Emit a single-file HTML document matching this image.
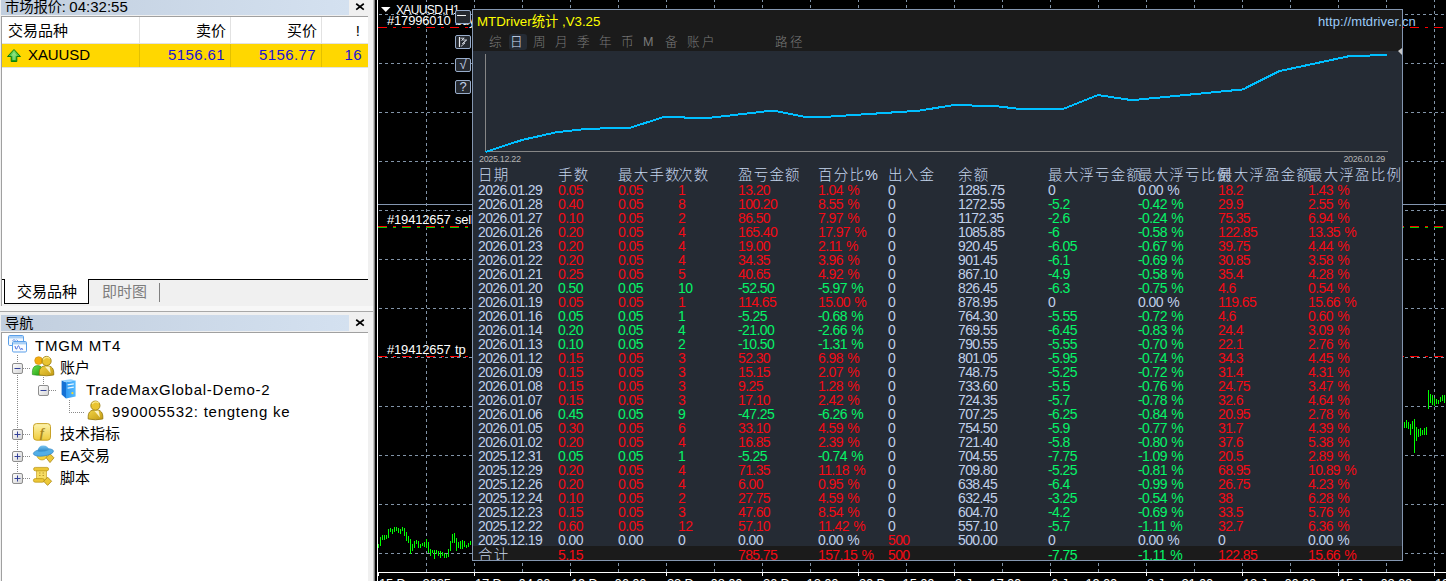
<!DOCTYPE html>
<html lang="zh-CN"><head><meta charset="utf-8"><title>MT4</title>
<style>
html,body{margin:0;padding:0}
body{width:1446px;height:581px;overflow:hidden;background:#f0f0f0;position:relative;font-family:"Liberation Sans","Noto Sans CJK SC",sans-serif;font-size:15px;color:#000}
.a{position:absolute}
.t{position:absolute;white-space:nowrap;line-height:1}
#chart{position:absolute;left:378px;top:0;width:1068px;height:581px;background:#000;overflow:hidden}
#panel{position:absolute;left:472px;top:9px;width:929px;height:550px;background:#252b34;border:1px solid #8496b0;box-sizing:content-box;overflow:hidden}
.c{position:absolute;white-space:nowrap;font-size:14px;line-height:14px;height:14px;letter-spacing:-0.6px;word-spacing:1px}
.h{position:absolute;white-space:nowrap;font-size:14.5px;line-height:15px;letter-spacing:1.2px;color:#c6d6ee;font-family:"Liberation Sans","Noto Sans CJK SC",sans-serif;font-weight:300}
.r{color:#f40a14}.g{color:#06f468}.w{color:#c0d0ea}
.lt{position:absolute;white-space:nowrap;font-size:15px;line-height:22px;height:22px}
.ct{position:absolute;white-space:nowrap;color:#fff;font-size:13px;line-height:14px;letter-spacing:-0.17px}
.btn{position:absolute;left:455px;width:14px;height:12px;border:1px solid #98acca;border-radius:2px;background:#25292f}
</style></head><body>

<div class="a" style="left:1px;top:0;width:348px;height:15px;background:linear-gradient(90deg,#c1cede,#d4e1f0)"></div>
<div class="t" style="left:5px;top:-2px;font-size:15px;line-height:18px"><span style="font-size:14.4px;letter-spacing:-0.2px">市场报价: </span>04:32:55</div>
<svg class="a" style="left:354px;top:2px" width="11" height="11" viewBox="0 0 11 11"><path d="M2.2 1.8 L9.8 7.6 M9.8 1.8 L2.2 7.6" stroke="#000" stroke-width="1.7" fill="none"/></svg>
<div class="a" style="left:1px;top:16px;width:367px;height:290px;background:#fff;border-left:1px solid #a0a0a0;border-top:1px solid #a0a0a0;box-sizing:border-box"></div>
<div class="a" style="left:139px;top:17px;width:1px;height:26px;background:#e2e2e2"></div>
<div class="a" style="left:230px;top:17px;width:1px;height:26px;background:#e2e2e2"></div>
<div class="a" style="left:321px;top:17px;width:1px;height:26px;background:#e2e2e2"></div>
<div class="a" style="left:2px;top:43px;width:366px;height:1px;background:#e2e2e2"></div>
<div class="a" style="left:2px;top:44px;width:366px;height:23px;background:#ffd700"></div>
<div class="a" style="left:2px;top:67px;width:366px;height:1px;background:#e2e2e2"></div>
<div class="a" style="left:139px;top:44px;width:1px;height:23px;background:#e3c000"></div>
<div class="a" style="left:230px;top:44px;width:1px;height:23px;background:#e3c000"></div>
<div class="a" style="left:321px;top:44px;width:1px;height:23px;background:#e3c000"></div>
<div class="lt" style="left:8px;top:20px">交易品种</div>
<div class="lt" style="right:1220px;top:20px">卖价</div>
<div class="lt" style="right:1129px;top:20px">买价</div>
<div class="lt" style="right:1086px;top:20px">!</div>
<svg class="a" style="left:6px;top:48px" width="16" height="16" viewBox="0 0 16 16"><defs><linearGradient id="ga" x1="0" y1="0" x2="0" y2="1"><stop offset="0" stop-color="#7be36a"/><stop offset="1" stop-color="#0f9a12"/></linearGradient></defs><path d="M8 1.5 L14.5 8.5 L10.8 8.5 L10.8 13.5 L5.2 13.5 L5.2 8.5 L1.5 8.5 Z" fill="url(#ga)" stroke="#0b7d10" stroke-width="1"/><path d="M8 4 L11.5 7.8 L9.6 7.8 L9.6 12 L6.4 12 L6.4 7.8 L4.5 7.8 Z" fill="#b9f5a8" opacity=".55"/></svg>
<div class="lt" style="left:28px;top:44px;letter-spacing:-.1px">XAUUSD</div>
<div class="lt" style="right:1221px;top:44px;color:#1c14d2;letter-spacing:.4px">5156.61</div>
<div class="lt" style="right:1130px;top:44px;color:#1c14d2;letter-spacing:.4px">5156.77</div>
<div class="lt" style="right:1084px;top:44px;color:#1c14d2;letter-spacing:.4px">16</div>
<div class="a" style="left:2px;top:279px;width:366px;height:27px;background:#f0f0f0"></div>
<div class="a" style="left:2px;top:279px;width:366px;height:1px;background:#000"></div>
<div class="a" style="left:2px;top:279px;width:3px;height:25px;background:#fff"></div>
<div class="a" style="left:4px;top:279px;width:85px;height:25px;background:#fff;border:1px solid #000;border-top:none;box-sizing:border-box"></div>
<div class="a" style="left:2px;top:279px;width:3px;height:1px;background:#000"></div>
<div class="lt" style="left:17px;top:281px">交易品种</div>
<div class="lt" style="left:102px;top:281px;color:#7d7d7d">即时图</div>
<div class="a" style="left:159px;top:283px;width:1px;height:19px;background:#808080"></div>
<div class="a" style="left:0;top:306px;width:373px;height:5px;background:#f7f7f7"></div>
<div class="a" style="left:0;top:311px;width:373px;height:1px;background:#a8a8a8"></div>
<div class="a" style="left:1px;top:315px;width:348px;height:16px;background:linear-gradient(90deg,#c1cede,#d4e1f0)"></div>
<div class="t" style="left:5px;top:314px;font-size:14.2px;line-height:18px">导航</div>
<svg class="a" style="left:354px;top:318px" width="11" height="11" viewBox="0 0 11 11"><path d="M2.2 1.8 L9.8 7.6 M9.8 1.8 L2.2 7.6" stroke="#000" stroke-width="1.7" fill="none"/></svg>
<div class="a" style="left:1px;top:332px;width:367px;height:260px;background:#fff;border-left:1px solid #a0a0a0;border-top:1px solid #a0a0a0;box-sizing:border-box"></div>
<div class="a" style="left:17px;top:355px;width:1px;height:118px;background:repeating-linear-gradient(180deg,#8a8a8a 0 1px,transparent 1px 2px)"></div>
<div class="a" style="left:23px;top:368px;width:8px;height:1px;background:repeating-linear-gradient(90deg,#8a8a8a 0 1px,transparent 1px 2px)"></div>
<div class="a" style="left:23px;top:434px;width:8px;height:1px;background:repeating-linear-gradient(90deg,#8a8a8a 0 1px,transparent 1px 2px)"></div>
<div class="a" style="left:23px;top:456px;width:8px;height:1px;background:repeating-linear-gradient(90deg,#8a8a8a 0 1px,transparent 1px 2px)"></div>
<div class="a" style="left:23px;top:478px;width:8px;height:1px;background:repeating-linear-gradient(90deg,#8a8a8a 0 1px,transparent 1px 2px)"></div>
<div class="a" style="left:43px;top:377px;width:1px;height:8px;background:repeating-linear-gradient(180deg,#8a8a8a 0 1px,transparent 1px 2px)"></div>
<div class="a" style="left:49px;top:390px;width:8px;height:1px;background:repeating-linear-gradient(90deg,#8a8a8a 0 1px,transparent 1px 2px)"></div>
<div class="a" style="left:69px;top:400px;width:1px;height:13px;background:repeating-linear-gradient(180deg,#8a8a8a 0 1px,transparent 1px 2px)"></div>
<div class="a" style="left:69px;top:412px;width:15px;height:1px;background:repeating-linear-gradient(90deg,#8a8a8a 0 1px,transparent 1px 2px)"></div>
<svg class="a" style="left:12px;top:363px" width="11" height="11" viewBox="0 0 11 11"><defs><linearGradient id="gb17368" x1="0" y1="0" x2="1" y2="1"><stop offset="0" stop-color="#fff"/><stop offset="1" stop-color="#d4d4d4"/></linearGradient></defs><rect x=".5" y=".5" width="10" height="10" rx="1.5" fill="url(#gb17368)" stroke="#8e8e8e"/><path d="M2.5 5.5 H8.5" stroke="#33419a" stroke-width="1" fill="none"/></svg>
<svg class="a" style="left:38px;top:385px" width="11" height="11" viewBox="0 0 11 11"><defs><linearGradient id="gb43390" x1="0" y1="0" x2="1" y2="1"><stop offset="0" stop-color="#fff"/><stop offset="1" stop-color="#d4d4d4"/></linearGradient></defs><rect x=".5" y=".5" width="10" height="10" rx="1.5" fill="url(#gb43390)" stroke="#8e8e8e"/><path d="M2.5 5.5 H8.5" stroke="#33419a" stroke-width="1" fill="none"/></svg>
<svg class="a" style="left:12px;top:429px" width="11" height="11" viewBox="0 0 11 11"><defs><linearGradient id="gb17434" x1="0" y1="0" x2="1" y2="1"><stop offset="0" stop-color="#fff"/><stop offset="1" stop-color="#d4d4d4"/></linearGradient></defs><rect x=".5" y=".5" width="10" height="10" rx="1.5" fill="url(#gb17434)" stroke="#8e8e8e"/><path d="M2.5 5.5 H8.5 M5.5 2.5 V8.5" stroke="#33419a" stroke-width="1" fill="none"/></svg>
<svg class="a" style="left:12px;top:451px" width="11" height="11" viewBox="0 0 11 11"><defs><linearGradient id="gb17456" x1="0" y1="0" x2="1" y2="1"><stop offset="0" stop-color="#fff"/><stop offset="1" stop-color="#d4d4d4"/></linearGradient></defs><rect x=".5" y=".5" width="10" height="10" rx="1.5" fill="url(#gb17456)" stroke="#8e8e8e"/><path d="M2.5 5.5 H8.5 M5.5 2.5 V8.5" stroke="#33419a" stroke-width="1" fill="none"/></svg>
<svg class="a" style="left:12px;top:473px" width="11" height="11" viewBox="0 0 11 11"><defs><linearGradient id="gb17478" x1="0" y1="0" x2="1" y2="1"><stop offset="0" stop-color="#fff"/><stop offset="1" stop-color="#d4d4d4"/></linearGradient></defs><rect x=".5" y=".5" width="10" height="10" rx="1.5" fill="url(#gb17478)" stroke="#8e8e8e"/><path d="M2.5 5.5 H8.5 M5.5 2.5 V8.5" stroke="#33419a" stroke-width="1" fill="none"/></svg>
<div class="lt" style="left:35px;top:335px;letter-spacing:.75px">TMGM MT4</div>
<div class="lt" style="left:60px;top:357px">账户</div>
<div class="lt" style="left:86px;top:379px;letter-spacing:.75px">TradeMaxGlobal-Demo-2</div>
<div class="lt" style="left:112px;top:401px;letter-spacing:.75px">990005532: tengteng ke</div>
<div class="lt" style="left:60px;top:423px">技术指标</div>
<div class="lt" style="left:60px;top:445px">EA交易</div>
<div class="lt" style="left:60px;top:467px">脚本</div>
<svg class="a" style="left:0;top:333px" width="120" height="160" viewBox="0 333 120 160"><defs>
<linearGradient id="gy" x1="0" y1="0" x2="0" y2="1"><stop offset="0" stop-color="#fdf4ae"/><stop offset="1" stop-color="#efca3a"/></linearGradient>
<linearGradient id="gy2" x1="0" y1="0" x2="1" y2="1"><stop offset="0" stop-color="#f2d548"/><stop offset="1" stop-color="#c39a12"/></linearGradient>
<linearGradient id="gg" x1="0" y1="0" x2="1" y2="1"><stop offset="0" stop-color="#6fe24c"/><stop offset="1" stop-color="#189a10"/></linearGradient>
<linearGradient id="gbl" x1="0" y1="0" x2="1" y2="0"><stop offset="0" stop-color="#2f9af2"/><stop offset="1" stop-color="#56bbff"/></linearGradient>
<linearGradient id="gh" x1="0" y1="0" x2="0" y2="1"><stop offset="0" stop-color="#7cc6f0"/><stop offset="1" stop-color="#2a86c8"/></linearGradient>
</defs><rect x="8.5" y="335.5" width="15" height="10" rx="1.2" fill="#f3f8fe" stroke="#5a9fe9" stroke-width="1"/><rect x="9" y="336" width="14" height="2.4" fill="#a9cff6"/><path d="M12.5 341 l1.5 -1.6 l1.5 1.6 M16.5 339.6 l1.6 1.6" stroke="#6f93e6" stroke-width="1" fill="none"/><rect x="12.5" y="341.5" width="14" height="10.5" rx="1.2" fill="#fafcff" stroke="#5a9fe9" stroke-width="1"/><rect x="13" y="342" width="13" height="2.4" fill="#a9cff6"/><path d="M15 346 q1.1 5.4 2.3 1.6 q1.1 -3.6 2.3 0 q1.1 3.8 2.2 0.6 l1 1.6" stroke="#4e6fe0" stroke-width="1" fill="none"/><path d="M32.4 374.6 C32 368.5 33.6 365.6 37.6 365.6 C41.6 365.6 43 368.5 43 374.8 Q37.5 376 32.4 374.6 Z" fill="url(#gg)" stroke="#1a8a12" stroke-width=".6"/><circle cx="38.6" cy="360.6" r="3.9" fill="#f4ac10" stroke="#c98a08" stroke-width=".6"/><path d="M39.3 375 C38.8 368.6 41 365.8 46.5 365.8 C52 365.8 54.2 368.6 53.7 375 Q46.5 376.6 39.3 375 Z" fill="url(#gy2)" stroke="#927508" stroke-width=".8"/><path d="M44.8 366.6 L49.6 366.6 L50.8 373.5 Z" fill="#fff7d0" opacity=".9"/><circle cx="46.6" cy="361" r="4.6" fill="#e9c432" stroke="#927508" stroke-width=".8"/><path d="M43.2 359.5 q3 -3.5 6.6 -1" stroke="#f9e88a" stroke-width="1.2" fill="none"/><path d="M61.6 380.6 L66 382.2 L66 398.6 L61.6 394.6 Z" fill="#1470d4"/><path d="M66 382.2 L75.6 380.6 L75.6 396.4 L66 398.6 Z" fill="url(#gbl)"/><path d="M61.6 380.6 L70.8 379.2 L75.6 380.6 L66 382.2 Z" fill="#8fd0ff"/><path d="M67.6 384.8 L73.8 383.8 M67.6 388.2 L73.8 387.2" stroke="#e8f6ff" stroke-width="1.3"/><circle cx="72.4" cy="393.2" r="1.1" fill="#f8d830"/><path d="M88.2 419 C87.7 412.6 90 409.8 95.5 409.8 C101 409.8 103.3 412.6 102.8 419 Q95.5 420.6 88.2 419 Z" fill="url(#gy2)" stroke="#927508" stroke-width=".8"/><path d="M94 410.4 L98.6 410.4 L100 417.6 Z" fill="#fff7d0" opacity=".9"/><circle cx="95.4" cy="405.6" r="4.6" fill="#e9c432" stroke="#927508" stroke-width=".8"/><path d="M92 404 q3 -3.5 6.6 -1" stroke="#f9e88a" stroke-width="1.2" fill="none"/><rect x="33.5" y="423.6" width="17" height="16.6" rx="3" fill="url(#gy)" stroke="#c8a228" stroke-width="1"/><text x="42" y="436.6" text-anchor="middle" font-family="Liberation Serif,serif" font-style="italic" font-weight="bold" font-size="13" fill="#a9861c">f</text><path d="M36.8 454.6 a5.2 5.4 0 0 0 10.4 0 z" fill="#f6d23c" stroke="#b8920f" stroke-width=".6"/><path d="M46 457.6 L50 453.8 L54 457.8 L50 462.6 Z" fill="#ecc838" stroke="#a98612" stroke-width=".8"/><ellipse cx="43.4" cy="452.4" rx="10.2" ry="3.6" fill="#52aee6" stroke="#2a7fc0" stroke-width=".6" transform="rotate(-8 43.4 452.4)"/><path d="M37.6 451.2 q0.6 -5.8 5.6 -5.8 q5 0 5.8 4.6 q-5.6 2.4 -11.4 1.2 z" fill="url(#gh)"/><rect x="36.6" y="469" width="10" height="12" fill="#f6dc64" stroke="#c8a228" stroke-width=".7"/><rect x="33.6" y="467.4" width="15" height="3.4" rx="1.7" fill="#ecc636" stroke="#b8920f" stroke-width=".7"/><rect x="33.4" y="478.6" width="11" height="3.6" rx="1.8" fill="#ecc636" stroke="#b8920f" stroke-width=".7"/><path d="M39 473 h1.5 M42.5 473 h1.5 M39 475.5 h1.5 M42.5 475.5 h1.5" stroke="#b89a30" stroke-width="1"/><path d="M43.6 481.2 L47.6 477.2 L51.6 481.2 L47.6 485.4 Z" fill="#ecc838" stroke="#a98612" stroke-width=".8"/></svg>
<div class="a" style="left:373px;top:0;width:3px;height:581px;background:linear-gradient(90deg,#e4e4e4,#6a6a6a 60%,#000)"></div>
<div class="a" style="left:375px;top:0;width:2px;height:581px;background:#000"></div>
<div class="a" style="left:377px;top:0;width:1px;height:581px;background:#fff"></div>
<div id="chart">
<svg class="a" style="left:0;top:0" width="1068" height="581" viewBox="378 0 1068 581" shape-rendering="crispEdges"><path d="M426.5 -1 V572" stroke="#8294a8" stroke-width="1" stroke-dasharray="3 3" fill="none"/><path d="M474.5 -1 V572" stroke="#8294a8" stroke-width="1" stroke-dasharray="3 3" fill="none"/><path d="M522.5 -1 V572" stroke="#8294a8" stroke-width="1" stroke-dasharray="3 3" fill="none"/><path d="M570.5 -1 V572" stroke="#8294a8" stroke-width="1" stroke-dasharray="3 3" fill="none"/><path d="M618.5 -1 V572" stroke="#8294a8" stroke-width="1" stroke-dasharray="3 3" fill="none"/><path d="M666.5 -1 V572" stroke="#8294a8" stroke-width="1" stroke-dasharray="3 3" fill="none"/><path d="M714.5 -1 V572" stroke="#8294a8" stroke-width="1" stroke-dasharray="3 3" fill="none"/><path d="M762.5 -1 V572" stroke="#8294a8" stroke-width="1" stroke-dasharray="3 3" fill="none"/><path d="M810.5 -1 V572" stroke="#8294a8" stroke-width="1" stroke-dasharray="3 3" fill="none"/><path d="M858.5 -1 V572" stroke="#8294a8" stroke-width="1" stroke-dasharray="3 3" fill="none"/><path d="M906.5 -1 V572" stroke="#8294a8" stroke-width="1" stroke-dasharray="3 3" fill="none"/><path d="M954.5 -1 V572" stroke="#8294a8" stroke-width="1" stroke-dasharray="3 3" fill="none"/><path d="M1002.5 -1 V572" stroke="#8294a8" stroke-width="1" stroke-dasharray="3 3" fill="none"/><path d="M1050.5 -1 V572" stroke="#8294a8" stroke-width="1" stroke-dasharray="3 3" fill="none"/><path d="M1098.5 -1 V572" stroke="#8294a8" stroke-width="1" stroke-dasharray="3 3" fill="none"/><path d="M1146.5 -1 V572" stroke="#8294a8" stroke-width="1" stroke-dasharray="3 3" fill="none"/><path d="M1194.5 -1 V572" stroke="#8294a8" stroke-width="1" stroke-dasharray="3 3" fill="none"/><path d="M1242.5 -1 V572" stroke="#8294a8" stroke-width="1" stroke-dasharray="3 3" fill="none"/><path d="M1290.5 -1 V572" stroke="#8294a8" stroke-width="1" stroke-dasharray="3 3" fill="none"/><path d="M1338.5 -1 V572" stroke="#8294a8" stroke-width="1" stroke-dasharray="3 3" fill="none"/><path d="M1386.5 -1 V572" stroke="#8294a8" stroke-width="1" stroke-dasharray="3 3" fill="none"/><path d="M1434.5 -1 V572" stroke="#8294a8" stroke-width="1" stroke-dasharray="3 3" fill="none"/><path d="M379 14.5 H1446" stroke="#8294a8" stroke-width="1" stroke-dasharray="3 3" fill="none"/><path d="M379 63.5 H1446" stroke="#8294a8" stroke-width="1" stroke-dasharray="3 3" fill="none"/><path d="M379 112.5 H1446" stroke="#8294a8" stroke-width="1" stroke-dasharray="3 3" fill="none"/><path d="M379 161.5 H1446" stroke="#8294a8" stroke-width="1" stroke-dasharray="3 3" fill="none"/><path d="M379 210.5 H1446" stroke="#8294a8" stroke-width="1" stroke-dasharray="3 3" fill="none"/><path d="M379 259.5 H1446" stroke="#8294a8" stroke-width="1" stroke-dasharray="3 3" fill="none"/><path d="M379 308.5 H1446" stroke="#8294a8" stroke-width="1" stroke-dasharray="3 3" fill="none"/><path d="M379 357.5 H1446" stroke="#8294a8" stroke-width="1" stroke-dasharray="3 3" fill="none"/><path d="M379 406.5 H1446" stroke="#8294a8" stroke-width="1" stroke-dasharray="3 3" fill="none"/><path d="M379 455.5 H1446" stroke="#8294a8" stroke-width="1" stroke-dasharray="3 3" fill="none"/><path d="M379 504.5 H1446" stroke="#8294a8" stroke-width="1" stroke-dasharray="3 3" fill="none"/><path d="M379 553.5 H1446" stroke="#8294a8" stroke-width="1" stroke-dasharray="3 3" fill="none"/><path d="M378 204.5 H1446" stroke="#8496b0" stroke-width="1" fill="none"/><path d="M378 27.5 H1446" stroke="#ff0000" stroke-width="1" stroke-dasharray="9 6 3 6" fill="none"/><path d="M378 226.5 H1446" stroke="#ff0000" stroke-width="1" stroke-dasharray="9 6 3 6" fill="none"/><path d="M378 227.5 H1446" stroke="#00d000" stroke-width="1" stroke-dasharray="9 6 3 6" fill="none"/><path d="M378 356.5 H1446" stroke="#ff0000" stroke-width="1" stroke-dasharray="9 6 3 6" fill="none"/><path d="M378.5 544 V548" stroke="#00ff00" stroke-width="1" fill="none"/><path d="M380.5 537 V546" stroke="#00ff00" stroke-width="1" fill="none"/><path d="M382.5 535 V540" stroke="#00ff00" stroke-width="1" fill="none"/><path d="M384.5 535 V540" stroke="#00ff00" stroke-width="1" fill="none"/><path d="M386.5 535 V539" stroke="#00ff00" stroke-width="1" fill="none"/><path d="M388.5 529 V538" stroke="#00ff00" stroke-width="1" fill="none"/><path d="M390.5 528 V532" stroke="#00ff00" stroke-width="1" fill="none"/><path d="M392.5 529 V534" stroke="#00ff00" stroke-width="1" fill="none"/><path d="M394.5 527 V532" stroke="#00ff00" stroke-width="1" fill="none"/><path d="M396.5 527 V531" stroke="#00ff00" stroke-width="1" fill="none"/><path d="M398.5 528 V533" stroke="#00ff00" stroke-width="1" fill="none"/><path d="M400.5 529 V534" stroke="#00ff00" stroke-width="1" fill="none"/><path d="M402.5 527 V531" stroke="#00ff00" stroke-width="1" fill="none"/><path d="M404.5 528 V536" stroke="#00ff00" stroke-width="1" fill="none"/><path d="M406.5 532 V541" stroke="#00ff00" stroke-width="1" fill="none"/><path d="M408.5 536 V543" stroke="#00ff00" stroke-width="1" fill="none"/><path d="M410.5 539 V554" stroke="#00ff00" stroke-width="1" fill="none"/><path d="M412.5 544 V551" stroke="#00ff00" stroke-width="1" fill="none"/><path d="M414.5 541 V548" stroke="#00ff00" stroke-width="1" fill="none"/><path d="M416.5 540 V544" stroke="#00ff00" stroke-width="1" fill="none"/><path d="M418.5 541 V548" stroke="#00ff00" stroke-width="1" fill="none"/><path d="M420.5 544 V548" stroke="#00ff00" stroke-width="1" fill="none"/><path d="M422.5 543 V546" stroke="#00ff00" stroke-width="1" fill="none"/><path d="M424.5 542 V547" stroke="#00ff00" stroke-width="1" fill="none"/><path d="M426.5 539 V548" stroke="#00ff00" stroke-width="1" fill="none"/><path d="M428.5 542 V553" stroke="#00ff00" stroke-width="1" fill="none"/><path d="M430.5 549 V556" stroke="#00ff00" stroke-width="1" fill="none"/><path d="M432.5 550 V553" stroke="#00ff00" stroke-width="1" fill="none"/><path d="M434.5 550 V559" stroke="#00ff00" stroke-width="1" fill="none"/><path d="M436.5 550 V554" stroke="#00ff00" stroke-width="1" fill="none"/><path d="M438.5 551 V556" stroke="#00ff00" stroke-width="1" fill="none"/><path d="M440.5 551 V558" stroke="#00ff00" stroke-width="1" fill="none"/><path d="M442.5 552 V556" stroke="#00ff00" stroke-width="1" fill="none"/><path d="M444.5 553 V558" stroke="#00ff00" stroke-width="1" fill="none"/><path d="M446.5 554 V558" stroke="#00ff00" stroke-width="1" fill="none"/><path d="M448.5 549 V557" stroke="#00ff00" stroke-width="1" fill="none"/><path d="M450.5 541 V551" stroke="#00ff00" stroke-width="1" fill="none"/><path d="M452.5 534 V543" stroke="#00ff00" stroke-width="1" fill="none"/><path d="M454.5 533 V543" stroke="#00ff00" stroke-width="1" fill="none"/><path d="M456.5 538 V551" stroke="#00ff00" stroke-width="1" fill="none"/><path d="M458.5 542 V548" stroke="#00ff00" stroke-width="1" fill="none"/><path d="M460.5 541 V549" stroke="#00ff00" stroke-width="1" fill="none"/><path d="M462.5 540 V549" stroke="#00ff00" stroke-width="1" fill="none"/><path d="M464.5 541 V547" stroke="#00ff00" stroke-width="1" fill="none"/><path d="M466.5 545 V548" stroke="#00ff00" stroke-width="1" fill="none"/><path d="M468.5 543 V547" stroke="#00ff00" stroke-width="1" fill="none"/><path d="M470.5 541 V545" stroke="#00ff00" stroke-width="1" fill="none"/><path d="M1404.5 422 V428" stroke="#00ff00" stroke-width="1" fill="none"/><path d="M1406.5 420 V428" stroke="#00ff00" stroke-width="1" fill="none"/><path d="M1408.5 422 V429" stroke="#00ff00" stroke-width="1" fill="none"/><path d="M1410.5 424 V435" stroke="#00ff00" stroke-width="1" fill="none"/><path d="M1412.5 421 V429" stroke="#00ff00" stroke-width="1" fill="none"/><path d="M1414.5 419 V453" stroke="#00ff00" stroke-width="1" fill="none"/><path d="M1416.5 427 V441" stroke="#00ff00" stroke-width="1" fill="none"/><path d="M1418.5 429 V437" stroke="#00ff00" stroke-width="1" fill="none"/><path d="M1420.5 428 V436" stroke="#00ff00" stroke-width="1" fill="none"/><path d="M1422.5 430 V435" stroke="#00ff00" stroke-width="1" fill="none"/><path d="M1424.5 428 V435" stroke="#00ff00" stroke-width="1" fill="none"/><path d="M1426.5 427 V435" stroke="#00ff00" stroke-width="1" fill="none"/><path d="M1428.5 390 V409" stroke="#00ff00" stroke-width="1" fill="none"/><path d="M1430.5 394 V403" stroke="#00ff00" stroke-width="1" fill="none"/><path d="M1432.5 395 V405" stroke="#00ff00" stroke-width="1" fill="none"/><path d="M1434.5 398 V406" stroke="#00ff00" stroke-width="1" fill="none"/><path d="M1436.5 399 V404" stroke="#00ff00" stroke-width="1" fill="none"/><path d="M1438.5 400 V404" stroke="#00ff00" stroke-width="1" fill="none"/><path d="M1440.5 397 V402" stroke="#00ff00" stroke-width="1" fill="none"/><path d="M1442.5 395 V401" stroke="#00ff00" stroke-width="1" fill="none"/><path d="M1444.5 395 V403" stroke="#00ff00" stroke-width="1" fill="none"/><path d="M378 572.5 H1446" stroke="#fff" stroke-width="1" fill="none"/><path d="M378.5 572 V576" stroke="#fff" stroke-width="1" fill="none"/><path d="M474.5 572 V576" stroke="#fff" stroke-width="1" fill="none"/><path d="M570.5 572 V576" stroke="#fff" stroke-width="1" fill="none"/><path d="M666.5 572 V576" stroke="#fff" stroke-width="1" fill="none"/><path d="M762.5 572 V576" stroke="#fff" stroke-width="1" fill="none"/><path d="M858.5 572 V576" stroke="#fff" stroke-width="1" fill="none"/><path d="M954.5 572 V576" stroke="#fff" stroke-width="1" fill="none"/><path d="M1050.5 572 V576" stroke="#fff" stroke-width="1" fill="none"/><path d="M1146.5 572 V576" stroke="#fff" stroke-width="1" fill="none"/><path d="M1242.5 572 V576" stroke="#fff" stroke-width="1" fill="none"/><path d="M1338.5 572 V576" stroke="#fff" stroke-width="1" fill="none"/><path d="M1434.5 572 V576" stroke="#fff" stroke-width="1" fill="none"/><path d="M381 7 H390.5 L385.75 12 Z" fill="#fff" shape-rendering="auto"/></svg>
</div>
<div class="ct" style="left:396px;top:3px;font-size:12px;letter-spacing:-0.63px">XAUUSD,H1</div>
<div class="ct" style="left:387px;top:14px;word-spacing:1px">#17996010 buy</div>
<div class="ct" style="left:387px;top:213px;word-spacing:1px">#19412657 sell</div>
<div class="ct" style="left:387px;top:343px;word-spacing:1px">#19412657 tp</div>
<div class="ct" style="left:379px;top:577px">15 Dec 2025</div>
<div class="ct" style="left:475px;top:577px">17 Dec 04:00</div>
<div class="ct" style="left:571px;top:577px">19 Dec 06:00</div>
<div class="ct" style="left:667px;top:577px">23 Dec 08:00</div>
<div class="ct" style="left:763px;top:577px">26 Dec 12:00</div>
<div class="ct" style="left:859px;top:577px">30 Dec 15:00</div>
<div class="ct" style="left:955px;top:577px">2 Jan 17:00</div>
<div class="ct" style="left:1051px;top:577px">6 Jan 19:00</div>
<div class="ct" style="left:1147px;top:577px">8 Jan 21:00</div>
<div class="ct" style="left:1243px;top:577px">13 Jan 00:00</div>
<div class="ct" style="left:1339px;top:577px">15 Jan 02:00</div>
<div class="ct" style="left:1435px;top:577px">19 Jan 04:00</div>
<div class="btn" style="top:10px;height:12px"><div class="a" style="left:1px;top:4px;width:9px;height:1px;background:#f4f6f8"></div></div>
<div class="btn" style="top:35px;height:12px"><svg class="a" style="left:2px;top:1px" width="11" height="10" viewBox="0 0 11 10"><path d="M1.5 0 V10" stroke="#e8eaee" stroke-width="1.2" fill="none"/><path d="M2.5 1.2 L6 1.2 L4.2 3 L8.8 3 L5 6 L7 6 L3 9.4 M6.2 0.8 L3.4 3.6 M8 3.4 L4 7" stroke="#d0d5de" stroke-width=".9" fill="none"/></svg></div>
<div class="btn" style="top:58px;height:12px"><div class="t" style="left:0;top:0;width:14px;text-align:center;font-size:13px;line-height:12px;color:#c4d2ea">√</div></div>
<div class="btn" style="top:80px;height:12px"><div class="t" style="left:0;top:0;width:14px;text-align:center;font-size:13px;line-height:12px;color:#c4d2ea">?</div></div>
<div id="panel">
<div class="a" style="left:0;top:0;width:930px;height:41px;background:#1b1b1b"></div>
<div class="t" style="left:4px;top:4px;font-size:13.3px;line-height:16px;color:#ffff00">MTDriver统计 ,V3.25</div>
<div class="a" style="left:36px;top:24px;width:18px;height:16px;background:#252b34;border-radius:3px"></div>
<div class="t" style="left:16px;top:24px;font-size:12.6px;line-height:16px;color:#7a7a7a;font-weight:300;letter-spacing:2.4px">综</div>
<div class="t" style="left:37px;top:24px;font-size:12.6px;line-height:16px;color:#d2e0f8;font-weight:300;letter-spacing:2.4px">日</div>
<div class="t" style="left:60px;top:24px;font-size:12.6px;line-height:16px;color:#7a7a7a;font-weight:300;letter-spacing:2.4px">周</div>
<div class="t" style="left:82px;top:24px;font-size:12.6px;line-height:16px;color:#7a7a7a;font-weight:300;letter-spacing:2.4px">月</div>
<div class="t" style="left:104px;top:24px;font-size:12.6px;line-height:16px;color:#7a7a7a;font-weight:300;letter-spacing:2.4px">季</div>
<div class="t" style="left:126px;top:24px;font-size:12.6px;line-height:16px;color:#7a7a7a;font-weight:300;letter-spacing:2.4px">年</div>
<div class="t" style="left:148px;top:24px;font-size:12.6px;line-height:16px;color:#7a7a7a;font-weight:300;letter-spacing:2.4px">币</div>
<div class="t" style="left:170px;top:24px;font-size:12.6px;line-height:16px;color:#7a7a7a;font-weight:300;letter-spacing:2.4px">M</div>
<div class="t" style="left:192px;top:24px;font-size:12.6px;line-height:16px;color:#7a7a7a;font-weight:300;letter-spacing:2.4px">备</div>
<div class="t" style="left:214px;top:24px;font-size:12.6px;line-height:16px;color:#7a7a7a;font-weight:300;letter-spacing:2.4px">账户</div>
<div class="t" style="left:302px;top:24px;font-size:12.6px;line-height:16px;color:#7a7a7a;font-weight:300;letter-spacing:2.4px">路径</div>
<svg class="a" style="left:0;top:0" width="930" height="551" viewBox="0 0 930 551"><path d="M12.5 44 V141.5 H915" stroke="#868686" stroke-width="1" fill="none" shape-rendering="crispEdges"/><path d="M12.5 142.0 L49.0 130.0 L83.0 122.3 L116.0 118.6 L139.0 118.4 L158.0 117.5 L192.0 106.6 L210.0 106.6 L212.0 108.0 L235.0 108.0 L300.0 100.5 L334.0 107.3 L346.0 107.3 L446.0 100.7 L481.0 95.0 L498.0 95.0 L500.0 96.0 L522.0 96.0 L547.0 99.0 L590.0 99.0 L625.0 85.0 L659.0 90.2 L770.0 79.4 L806.0 61.2 L875.0 46.4 L914.0 44.8" stroke="#00bfff" stroke-width="2" fill="none" stroke-linejoin="round" shape-rendering="crispEdges"/><path d="M929 38 L925 41 L929 45 Z" fill="#c8c8c8"/></svg>
<div class="t" style="left:6px;top:144px;font-size:9px;line-height:10px;letter-spacing:-.35px;color:#b4b4b4">2025.12.22</div>
<div class="t" style="right:17px;top:144px;font-size:9px;line-height:10px;letter-spacing:-.35px;color:#b4b4b4">2026.01.29</div>
<div class="h" style="left:5px;top:158px">日期</div>
<div class="h" style="left:85px;top:158px">手数</div>
<div class="h" style="left:145px;top:158px">最大手数</div>
<div class="h" style="left:205px;top:158px">次数</div>
<div class="h" style="left:265px;top:158px">盈亏金额</div>
<div class="h" style="left:345px;top:158px">百分比%</div>
<div class="h" style="left:415px;top:158px">出入金</div>
<div class="h" style="left:485px;top:158px">余额</div>
<div class="h" style="left:575px;top:158px">最大浮亏金额</div>
<div class="h" style="left:665px;top:158px">最大浮亏比例</div>
<div class="h" style="left:745px;top:158px">最大浮盈金额</div>
<div class="h" style="left:835px;top:158px">最大浮盈比例</div>
<div class="a" style="left:0;top:536px;width:929px;height:14px;background:#1b1b1b"></div>
<div class="c w" style="left:5px;top:173.0px">2026.01.29</div>
<div class="c r" style="left:85px;top:173.0px">0.05</div>
<div class="c r" style="left:145px;top:173.0px">0.05</div>
<div class="c r" style="left:205px;top:173.0px">1</div>
<div class="c r" style="left:265px;top:173.0px">13.20</div>
<div class="c r" style="left:345px;top:173.0px">1.04 %</div>
<div class="c w" style="left:415px;top:173.0px">0</div>
<div class="c w" style="left:485px;top:173.0px">1285.75</div>
<div class="c w" style="left:575px;top:173.0px">0</div>
<div class="c w" style="left:665px;top:173.0px">0.00 %</div>
<div class="c r" style="left:745px;top:173.0px">18.2</div>
<div class="c r" style="left:835px;top:173.0px">1.43 %</div>
<div class="c w" style="left:5px;top:187.0px">2026.01.28</div>
<div class="c r" style="left:85px;top:187.0px">0.40</div>
<div class="c r" style="left:145px;top:187.0px">0.05</div>
<div class="c r" style="left:205px;top:187.0px">8</div>
<div class="c r" style="left:265px;top:187.0px">100.20</div>
<div class="c r" style="left:345px;top:187.0px">8.55 %</div>
<div class="c w" style="left:415px;top:187.0px">0</div>
<div class="c w" style="left:485px;top:187.0px">1272.55</div>
<div class="c g" style="left:575px;top:187.0px">-5.2</div>
<div class="c g" style="left:665px;top:187.0px">-0.42 %</div>
<div class="c r" style="left:745px;top:187.0px">29.9</div>
<div class="c r" style="left:835px;top:187.0px">2.55 %</div>
<div class="c w" style="left:5px;top:201.0px">2026.01.27</div>
<div class="c r" style="left:85px;top:201.0px">0.10</div>
<div class="c r" style="left:145px;top:201.0px">0.05</div>
<div class="c r" style="left:205px;top:201.0px">2</div>
<div class="c r" style="left:265px;top:201.0px">86.50</div>
<div class="c r" style="left:345px;top:201.0px">7.97 %</div>
<div class="c w" style="left:415px;top:201.0px">0</div>
<div class="c w" style="left:485px;top:201.0px">1172.35</div>
<div class="c g" style="left:575px;top:201.0px">-2.6</div>
<div class="c g" style="left:665px;top:201.0px">-0.24 %</div>
<div class="c r" style="left:745px;top:201.0px">75.35</div>
<div class="c r" style="left:835px;top:201.0px">6.94 %</div>
<div class="c w" style="left:5px;top:215.0px">2026.01.26</div>
<div class="c r" style="left:85px;top:215.0px">0.20</div>
<div class="c r" style="left:145px;top:215.0px">0.05</div>
<div class="c r" style="left:205px;top:215.0px">4</div>
<div class="c r" style="left:265px;top:215.0px">165.40</div>
<div class="c r" style="left:345px;top:215.0px">17.97 %</div>
<div class="c w" style="left:415px;top:215.0px">0</div>
<div class="c w" style="left:485px;top:215.0px">1085.85</div>
<div class="c g" style="left:575px;top:215.0px">-6</div>
<div class="c g" style="left:665px;top:215.0px">-0.58 %</div>
<div class="c r" style="left:745px;top:215.0px">122.85</div>
<div class="c r" style="left:835px;top:215.0px">13.35 %</div>
<div class="c w" style="left:5px;top:229.0px">2026.01.23</div>
<div class="c r" style="left:85px;top:229.0px">0.20</div>
<div class="c r" style="left:145px;top:229.0px">0.05</div>
<div class="c r" style="left:205px;top:229.0px">4</div>
<div class="c r" style="left:265px;top:229.0px">19.00</div>
<div class="c r" style="left:345px;top:229.0px">2.11 %</div>
<div class="c w" style="left:415px;top:229.0px">0</div>
<div class="c w" style="left:485px;top:229.0px">920.45</div>
<div class="c g" style="left:575px;top:229.0px">-6.05</div>
<div class="c g" style="left:665px;top:229.0px">-0.67 %</div>
<div class="c r" style="left:745px;top:229.0px">39.75</div>
<div class="c r" style="left:835px;top:229.0px">4.44 %</div>
<div class="c w" style="left:5px;top:243.0px">2026.01.22</div>
<div class="c r" style="left:85px;top:243.0px">0.20</div>
<div class="c r" style="left:145px;top:243.0px">0.05</div>
<div class="c r" style="left:205px;top:243.0px">4</div>
<div class="c r" style="left:265px;top:243.0px">34.35</div>
<div class="c r" style="left:345px;top:243.0px">3.96 %</div>
<div class="c w" style="left:415px;top:243.0px">0</div>
<div class="c w" style="left:485px;top:243.0px">901.45</div>
<div class="c g" style="left:575px;top:243.0px">-6.1</div>
<div class="c g" style="left:665px;top:243.0px">-0.69 %</div>
<div class="c r" style="left:745px;top:243.0px">30.85</div>
<div class="c r" style="left:835px;top:243.0px">3.58 %</div>
<div class="c w" style="left:5px;top:257.0px">2026.01.21</div>
<div class="c r" style="left:85px;top:257.0px">0.25</div>
<div class="c r" style="left:145px;top:257.0px">0.05</div>
<div class="c r" style="left:205px;top:257.0px">5</div>
<div class="c r" style="left:265px;top:257.0px">40.65</div>
<div class="c r" style="left:345px;top:257.0px">4.92 %</div>
<div class="c w" style="left:415px;top:257.0px">0</div>
<div class="c w" style="left:485px;top:257.0px">867.10</div>
<div class="c g" style="left:575px;top:257.0px">-4.9</div>
<div class="c g" style="left:665px;top:257.0px">-0.58 %</div>
<div class="c r" style="left:745px;top:257.0px">35.4</div>
<div class="c r" style="left:835px;top:257.0px">4.28 %</div>
<div class="c w" style="left:5px;top:271.0px">2026.01.20</div>
<div class="c g" style="left:85px;top:271.0px">0.50</div>
<div class="c g" style="left:145px;top:271.0px">0.05</div>
<div class="c g" style="left:205px;top:271.0px">10</div>
<div class="c g" style="left:265px;top:271.0px">-52.50</div>
<div class="c g" style="left:345px;top:271.0px">-5.97 %</div>
<div class="c w" style="left:415px;top:271.0px">0</div>
<div class="c w" style="left:485px;top:271.0px">826.45</div>
<div class="c g" style="left:575px;top:271.0px">-6.3</div>
<div class="c g" style="left:665px;top:271.0px">-0.75 %</div>
<div class="c r" style="left:745px;top:271.0px">4.6</div>
<div class="c r" style="left:835px;top:271.0px">0.54 %</div>
<div class="c w" style="left:5px;top:285.0px">2026.01.19</div>
<div class="c r" style="left:85px;top:285.0px">0.05</div>
<div class="c r" style="left:145px;top:285.0px">0.05</div>
<div class="c r" style="left:205px;top:285.0px">1</div>
<div class="c r" style="left:265px;top:285.0px">114.65</div>
<div class="c r" style="left:345px;top:285.0px">15.00 %</div>
<div class="c w" style="left:415px;top:285.0px">0</div>
<div class="c w" style="left:485px;top:285.0px">878.95</div>
<div class="c w" style="left:575px;top:285.0px">0</div>
<div class="c w" style="left:665px;top:285.0px">0.00 %</div>
<div class="c r" style="left:745px;top:285.0px">119.65</div>
<div class="c r" style="left:835px;top:285.0px">15.66 %</div>
<div class="c w" style="left:5px;top:299.0px">2026.01.16</div>
<div class="c g" style="left:85px;top:299.0px">0.05</div>
<div class="c g" style="left:145px;top:299.0px">0.05</div>
<div class="c g" style="left:205px;top:299.0px">1</div>
<div class="c g" style="left:265px;top:299.0px">-5.25</div>
<div class="c g" style="left:345px;top:299.0px">-0.68 %</div>
<div class="c w" style="left:415px;top:299.0px">0</div>
<div class="c w" style="left:485px;top:299.0px">764.30</div>
<div class="c g" style="left:575px;top:299.0px">-5.55</div>
<div class="c g" style="left:665px;top:299.0px">-0.72 %</div>
<div class="c r" style="left:745px;top:299.0px">4.6</div>
<div class="c r" style="left:835px;top:299.0px">0.60 %</div>
<div class="c w" style="left:5px;top:313.0px">2026.01.14</div>
<div class="c g" style="left:85px;top:313.0px">0.20</div>
<div class="c g" style="left:145px;top:313.0px">0.05</div>
<div class="c g" style="left:205px;top:313.0px">4</div>
<div class="c g" style="left:265px;top:313.0px">-21.00</div>
<div class="c g" style="left:345px;top:313.0px">-2.66 %</div>
<div class="c w" style="left:415px;top:313.0px">0</div>
<div class="c w" style="left:485px;top:313.0px">769.55</div>
<div class="c g" style="left:575px;top:313.0px">-6.45</div>
<div class="c g" style="left:665px;top:313.0px">-0.83 %</div>
<div class="c r" style="left:745px;top:313.0px">24.4</div>
<div class="c r" style="left:835px;top:313.0px">3.09 %</div>
<div class="c w" style="left:5px;top:327.0px">2026.01.13</div>
<div class="c g" style="left:85px;top:327.0px">0.10</div>
<div class="c g" style="left:145px;top:327.0px">0.05</div>
<div class="c g" style="left:205px;top:327.0px">2</div>
<div class="c g" style="left:265px;top:327.0px">-10.50</div>
<div class="c g" style="left:345px;top:327.0px">-1.31 %</div>
<div class="c w" style="left:415px;top:327.0px">0</div>
<div class="c w" style="left:485px;top:327.0px">790.55</div>
<div class="c g" style="left:575px;top:327.0px">-5.55</div>
<div class="c g" style="left:665px;top:327.0px">-0.70 %</div>
<div class="c r" style="left:745px;top:327.0px">22.1</div>
<div class="c r" style="left:835px;top:327.0px">2.76 %</div>
<div class="c w" style="left:5px;top:341.0px">2026.01.12</div>
<div class="c r" style="left:85px;top:341.0px">0.15</div>
<div class="c r" style="left:145px;top:341.0px">0.05</div>
<div class="c r" style="left:205px;top:341.0px">3</div>
<div class="c r" style="left:265px;top:341.0px">52.30</div>
<div class="c r" style="left:345px;top:341.0px">6.98 %</div>
<div class="c w" style="left:415px;top:341.0px">0</div>
<div class="c w" style="left:485px;top:341.0px">801.05</div>
<div class="c g" style="left:575px;top:341.0px">-5.95</div>
<div class="c g" style="left:665px;top:341.0px">-0.74 %</div>
<div class="c r" style="left:745px;top:341.0px">34.3</div>
<div class="c r" style="left:835px;top:341.0px">4.45 %</div>
<div class="c w" style="left:5px;top:355.0px">2026.01.09</div>
<div class="c r" style="left:85px;top:355.0px">0.15</div>
<div class="c r" style="left:145px;top:355.0px">0.05</div>
<div class="c r" style="left:205px;top:355.0px">3</div>
<div class="c r" style="left:265px;top:355.0px">15.15</div>
<div class="c r" style="left:345px;top:355.0px">2.07 %</div>
<div class="c w" style="left:415px;top:355.0px">0</div>
<div class="c w" style="left:485px;top:355.0px">748.75</div>
<div class="c g" style="left:575px;top:355.0px">-5.25</div>
<div class="c g" style="left:665px;top:355.0px">-0.72 %</div>
<div class="c r" style="left:745px;top:355.0px">31.4</div>
<div class="c r" style="left:835px;top:355.0px">4.31 %</div>
<div class="c w" style="left:5px;top:369.0px">2026.01.08</div>
<div class="c r" style="left:85px;top:369.0px">0.15</div>
<div class="c r" style="left:145px;top:369.0px">0.05</div>
<div class="c r" style="left:205px;top:369.0px">3</div>
<div class="c r" style="left:265px;top:369.0px">9.25</div>
<div class="c r" style="left:345px;top:369.0px">1.28 %</div>
<div class="c w" style="left:415px;top:369.0px">0</div>
<div class="c w" style="left:485px;top:369.0px">733.60</div>
<div class="c g" style="left:575px;top:369.0px">-5.5</div>
<div class="c g" style="left:665px;top:369.0px">-0.76 %</div>
<div class="c r" style="left:745px;top:369.0px">24.75</div>
<div class="c r" style="left:835px;top:369.0px">3.47 %</div>
<div class="c w" style="left:5px;top:383.0px">2026.01.07</div>
<div class="c r" style="left:85px;top:383.0px">0.15</div>
<div class="c r" style="left:145px;top:383.0px">0.05</div>
<div class="c r" style="left:205px;top:383.0px">3</div>
<div class="c r" style="left:265px;top:383.0px">17.10</div>
<div class="c r" style="left:345px;top:383.0px">2.42 %</div>
<div class="c w" style="left:415px;top:383.0px">0</div>
<div class="c w" style="left:485px;top:383.0px">724.35</div>
<div class="c g" style="left:575px;top:383.0px">-5.7</div>
<div class="c g" style="left:665px;top:383.0px">-0.78 %</div>
<div class="c r" style="left:745px;top:383.0px">32.6</div>
<div class="c r" style="left:835px;top:383.0px">4.64 %</div>
<div class="c w" style="left:5px;top:397.0px">2026.01.06</div>
<div class="c g" style="left:85px;top:397.0px">0.45</div>
<div class="c g" style="left:145px;top:397.0px">0.05</div>
<div class="c g" style="left:205px;top:397.0px">9</div>
<div class="c g" style="left:265px;top:397.0px">-47.25</div>
<div class="c g" style="left:345px;top:397.0px">-6.26 %</div>
<div class="c w" style="left:415px;top:397.0px">0</div>
<div class="c w" style="left:485px;top:397.0px">707.25</div>
<div class="c g" style="left:575px;top:397.0px">-6.25</div>
<div class="c g" style="left:665px;top:397.0px">-0.84 %</div>
<div class="c r" style="left:745px;top:397.0px">20.95</div>
<div class="c r" style="left:835px;top:397.0px">2.78 %</div>
<div class="c w" style="left:5px;top:411.0px">2026.01.05</div>
<div class="c r" style="left:85px;top:411.0px">0.30</div>
<div class="c r" style="left:145px;top:411.0px">0.05</div>
<div class="c r" style="left:205px;top:411.0px">6</div>
<div class="c r" style="left:265px;top:411.0px">33.10</div>
<div class="c r" style="left:345px;top:411.0px">4.59 %</div>
<div class="c w" style="left:415px;top:411.0px">0</div>
<div class="c w" style="left:485px;top:411.0px">754.50</div>
<div class="c g" style="left:575px;top:411.0px">-5.9</div>
<div class="c g" style="left:665px;top:411.0px">-0.77 %</div>
<div class="c r" style="left:745px;top:411.0px">31.7</div>
<div class="c r" style="left:835px;top:411.0px">4.39 %</div>
<div class="c w" style="left:5px;top:425.0px">2026.01.02</div>
<div class="c r" style="left:85px;top:425.0px">0.20</div>
<div class="c r" style="left:145px;top:425.0px">0.05</div>
<div class="c r" style="left:205px;top:425.0px">4</div>
<div class="c r" style="left:265px;top:425.0px">16.85</div>
<div class="c r" style="left:345px;top:425.0px">2.39 %</div>
<div class="c w" style="left:415px;top:425.0px">0</div>
<div class="c w" style="left:485px;top:425.0px">721.40</div>
<div class="c g" style="left:575px;top:425.0px">-5.8</div>
<div class="c g" style="left:665px;top:425.0px">-0.80 %</div>
<div class="c r" style="left:745px;top:425.0px">37.6</div>
<div class="c r" style="left:835px;top:425.0px">5.38 %</div>
<div class="c w" style="left:5px;top:439.0px">2025.12.31</div>
<div class="c g" style="left:85px;top:439.0px">0.05</div>
<div class="c g" style="left:145px;top:439.0px">0.05</div>
<div class="c g" style="left:205px;top:439.0px">1</div>
<div class="c g" style="left:265px;top:439.0px">-5.25</div>
<div class="c g" style="left:345px;top:439.0px">-0.74 %</div>
<div class="c w" style="left:415px;top:439.0px">0</div>
<div class="c w" style="left:485px;top:439.0px">704.55</div>
<div class="c g" style="left:575px;top:439.0px">-7.75</div>
<div class="c g" style="left:665px;top:439.0px">-1.09 %</div>
<div class="c r" style="left:745px;top:439.0px">20.5</div>
<div class="c r" style="left:835px;top:439.0px">2.89 %</div>
<div class="c w" style="left:5px;top:453.0px">2025.12.29</div>
<div class="c r" style="left:85px;top:453.0px">0.20</div>
<div class="c r" style="left:145px;top:453.0px">0.05</div>
<div class="c r" style="left:205px;top:453.0px">4</div>
<div class="c r" style="left:265px;top:453.0px">71.35</div>
<div class="c r" style="left:345px;top:453.0px">11.18 %</div>
<div class="c w" style="left:415px;top:453.0px">0</div>
<div class="c w" style="left:485px;top:453.0px">709.80</div>
<div class="c g" style="left:575px;top:453.0px">-5.25</div>
<div class="c g" style="left:665px;top:453.0px">-0.81 %</div>
<div class="c r" style="left:745px;top:453.0px">68.95</div>
<div class="c r" style="left:835px;top:453.0px">10.89 %</div>
<div class="c w" style="left:5px;top:467.0px">2025.12.26</div>
<div class="c r" style="left:85px;top:467.0px">0.20</div>
<div class="c r" style="left:145px;top:467.0px">0.05</div>
<div class="c r" style="left:205px;top:467.0px">4</div>
<div class="c r" style="left:265px;top:467.0px">6.00</div>
<div class="c r" style="left:345px;top:467.0px">0.95 %</div>
<div class="c w" style="left:415px;top:467.0px">0</div>
<div class="c w" style="left:485px;top:467.0px">638.45</div>
<div class="c g" style="left:575px;top:467.0px">-6.4</div>
<div class="c g" style="left:665px;top:467.0px">-0.99 %</div>
<div class="c r" style="left:745px;top:467.0px">26.75</div>
<div class="c r" style="left:835px;top:467.0px">4.23 %</div>
<div class="c w" style="left:5px;top:481.0px">2025.12.24</div>
<div class="c r" style="left:85px;top:481.0px">0.10</div>
<div class="c r" style="left:145px;top:481.0px">0.05</div>
<div class="c r" style="left:205px;top:481.0px">2</div>
<div class="c r" style="left:265px;top:481.0px">27.75</div>
<div class="c r" style="left:345px;top:481.0px">4.59 %</div>
<div class="c w" style="left:415px;top:481.0px">0</div>
<div class="c w" style="left:485px;top:481.0px">632.45</div>
<div class="c g" style="left:575px;top:481.0px">-3.25</div>
<div class="c g" style="left:665px;top:481.0px">-0.54 %</div>
<div class="c r" style="left:745px;top:481.0px">38</div>
<div class="c r" style="left:835px;top:481.0px">6.28 %</div>
<div class="c w" style="left:5px;top:495.0px">2025.12.23</div>
<div class="c r" style="left:85px;top:495.0px">0.15</div>
<div class="c r" style="left:145px;top:495.0px">0.05</div>
<div class="c r" style="left:205px;top:495.0px">3</div>
<div class="c r" style="left:265px;top:495.0px">47.60</div>
<div class="c r" style="left:345px;top:495.0px">8.54 %</div>
<div class="c w" style="left:415px;top:495.0px">0</div>
<div class="c w" style="left:485px;top:495.0px">604.70</div>
<div class="c g" style="left:575px;top:495.0px">-4.2</div>
<div class="c g" style="left:665px;top:495.0px">-0.69 %</div>
<div class="c r" style="left:745px;top:495.0px">33.5</div>
<div class="c r" style="left:835px;top:495.0px">5.76 %</div>
<div class="c w" style="left:5px;top:509.0px">2025.12.22</div>
<div class="c r" style="left:85px;top:509.0px">0.60</div>
<div class="c r" style="left:145px;top:509.0px">0.05</div>
<div class="c r" style="left:205px;top:509.0px">12</div>
<div class="c r" style="left:265px;top:509.0px">57.10</div>
<div class="c r" style="left:345px;top:509.0px">11.42 %</div>
<div class="c w" style="left:415px;top:509.0px">0</div>
<div class="c w" style="left:485px;top:509.0px">557.10</div>
<div class="c g" style="left:575px;top:509.0px">-5.7</div>
<div class="c g" style="left:665px;top:509.0px">-1.11 %</div>
<div class="c r" style="left:745px;top:509.0px">32.7</div>
<div class="c r" style="left:835px;top:509.0px">6.36 %</div>
<div class="c w" style="left:5px;top:523.0px">2025.12.19</div>
<div class="c w" style="left:85px;top:523.0px">0.00</div>
<div class="c w" style="left:145px;top:523.0px">0.00</div>
<div class="c w" style="left:205px;top:523.0px">0</div>
<div class="c w" style="left:265px;top:523.0px">0.00</div>
<div class="c w" style="left:345px;top:523.0px">0.00 %</div>
<div class="c r" style="left:415px;top:523.0px">500</div>
<div class="c w" style="left:485px;top:523.0px">500.00</div>
<div class="c w" style="left:575px;top:523.0px">0</div>
<div class="c w" style="left:665px;top:523.0px">0.00 %</div>
<div class="c w" style="left:745px;top:523.0px">0</div>
<div class="c w" style="left:835px;top:523.0px">0.00 %</div>
<div class="h" style="left:5px;top:538px">合计</div>
<div class="c r" style="left:85px;top:538.0px">5.15</div>
<div class="c r" style="left:265px;top:538.0px">785.75</div>
<div class="c r" style="left:345px;top:538.0px">157.15 %</div>
<div class="c r" style="left:415px;top:538.0px">500</div>
<div class="c g" style="left:575px;top:538.0px">-7.75</div>
<div class="c g" style="left:665px;top:538.0px">-1.11 %</div>
<div class="c r" style="left:745px;top:538.0px">122.85</div>
<div class="c r" style="left:835px;top:538.0px">15.66 %</div>
</div>
<div class="t" style="left:1318px;top:14px;font-size:13px;line-height:16px;letter-spacing:.1px;color:#9ccbf8">http://mtdriver.cn</div>
</body></html>
